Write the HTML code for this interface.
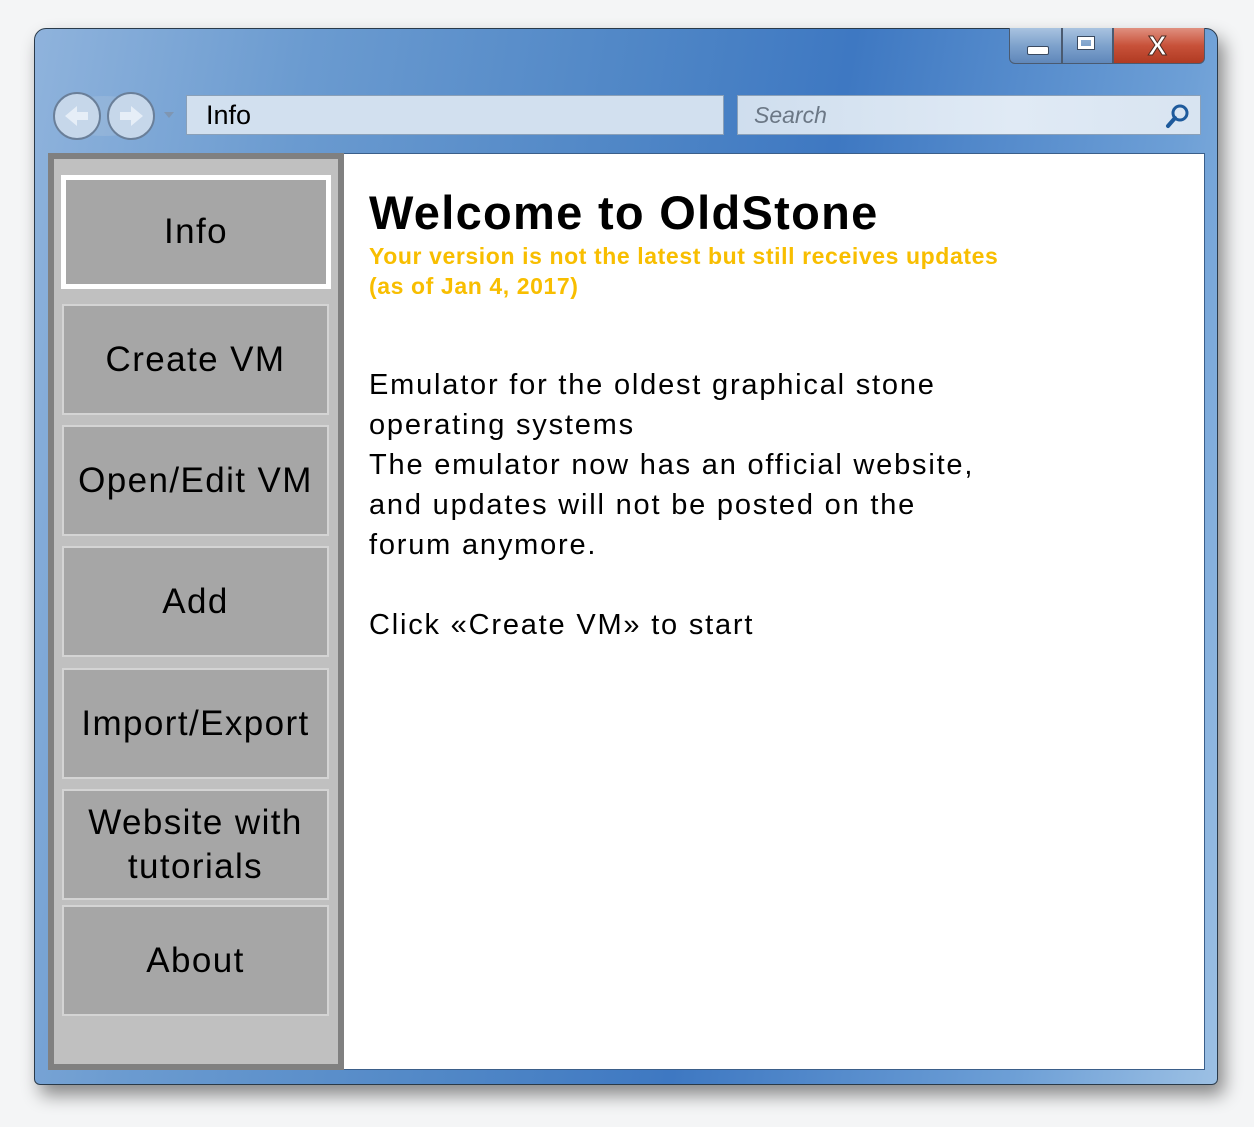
<!DOCTYPE html>
<html><head><style>
body{margin:0;width:1254px;height:1127px;background:#f4f5f6;position:relative;overflow:hidden;font-family:"Liberation Sans","DejaVu Sans",sans-serif;}
.win{position:absolute;left:34px;top:28px;width:1184px;height:1057px;border-radius:12px 12px 6px 6px;border:1px solid #2a3a4a;box-sizing:border-box;
background:linear-gradient(100deg,#8fb3dc 0%,#6b9bd0 20%,#4f86c6 45%,#3e78c2 60%,#6d9fd6 85%,#9cc0e4 100%);box-shadow:6px 10px 18px rgba(0,0,0,.45);}
.ctl{position:absolute;top:28px;height:36px;border:1px solid #4a5a70;border-top:none;box-sizing:border-box;}
.addr{position:absolute;left:186px;top:95px;width:538px;height:40px;background:#d2e0ef;border:1px solid #8aa0b8;box-sizing:border-box;font-size:27px;padding:4px 0 0 19px;color:#000;}
.search{position:absolute;left:737px;top:95px;width:464px;height:40px;background:linear-gradient(90deg,#cfdeee,#e0eaf5 60%,#d8e4f1);border:1px solid #8aa0b8;box-sizing:border-box;font-size:23px;padding:6px 0 0 16px;color:#6b7785;font-style:italic;}
.client{position:absolute;left:48px;top:153px;width:1157px;height:917px;background:#fff;border:1px solid #3b5f8a;box-sizing:border-box;}
.side{position:absolute;left:48px;top:153px;width:296px;height:917px;background:#c0c0c0;border:6px solid #808080;box-sizing:border-box;}
.btn{position:absolute;left:62px;width:267px;background:#a6a6a6;border:2px solid #d4d4d4;box-sizing:border-box;font-size:35px;letter-spacing:1.4px;color:#000;display:flex;align-items:center;justify-content:center;text-align:center;line-height:44px;}
.t{position:absolute;white-space:nowrap;}
</style></head><body>
<div class="win"></div>
<div class="ctl" style="left:1009px;width:53px;border-radius:0 0 0 6px;background:linear-gradient(#a9c3e0,#7ea2cc 50%,#5f87ba);"></div>
<div style="position:absolute;left:1027px;top:46px;width:20px;height:7px;background:#fff;border:1px solid #3a4a60;border-radius:2px"></div>
<div class="ctl" style="left:1062px;width:51px;background:linear-gradient(#a9c3e0,#7ea2cc 50%,#5f87ba);"></div>
<div style="position:absolute;left:1078px;top:37px;width:16px;height:12px;border:3px solid #fff;outline:1px solid #3a4a60;box-sizing:border-box"></div>
<div class="ctl" style="left:1113px;width:92px;border-radius:0 0 6px 0;background:linear-gradient(#e09080,#c8523a 50%,#b03a22);"></div>
<div class="t" style="left:1148px;top:30px;font-size:28px;font-weight:bold;color:#fff;-webkit-text-stroke:1px #4a2a20">X</div>
<svg style="position:absolute;left:50px;top:88px" width="130" height="56">
<ellipse cx="54" cy="28" rx="50" ry="20" fill="#9bb9da" opacity=".6"/>
<circle cx="27" cy="28" r="23" fill="#c6d7ea" stroke="#6a7f99" stroke-width="2"/>
<circle cx="81" cy="28" r="23" fill="#c6d7ea" stroke="#6a7f99" stroke-width="2"/>
<path d="M15 28 L27 18 V24 H38 V32 H27 V38 Z" fill="#e6eef7"/>
<path d="M93 28 L81 18 V24 H70 V32 H81 V38 Z" fill="#e6eef7"/>
<path d="M114 24 L124 24 L119 30 Z" fill="#7f96b2"/>
</svg>
<div class="addr">Info</div>
<div class="search">Search</div>
<svg style="position:absolute;left:1164px;top:102px" width="28" height="28"><circle cx="16" cy="11" r="7" fill="none" stroke="#1e5a9c" stroke-width="3"/><path d="M11 16 L4 24" stroke="#1e5a9c" stroke-width="4" stroke-linecap="round"/></svg>
<div class="client"></div>
<div class="side"></div>
<div class="btn" style="left:61px;top:175px;width:270px;height:114px;border:5px solid #fff;">Info</div>
<div class="btn" style="top:304px;height:111px;">Create VM</div>
<div class="btn" style="top:425px;height:111px;">Open/Edit VM</div>
<div class="btn" style="top:546px;height:111px;">Add</div>
<div class="btn" style="top:668px;height:111px;">Import/Export</div>
<div class="btn" style="top:789px;height:111px;">Website with<br>tutorials</div>
<div class="btn" style="top:905px;height:111px;">About</div>
<div class="t" style="left:369px;top:185px;font-size:47px;font-weight:bold;letter-spacing:1.3px">Welcome to OldStone</div>
<div class="t" style="left:369px;top:243px;font-size:23px;font-weight:bold;color:#f8be00;letter-spacing:.6px">Your version is not the latest but still receives updates</div>
<div class="t" style="left:369px;top:273px;font-size:23px;font-weight:bold;color:#f8be00;letter-spacing:.6px">(as of Jan 4, 2017)</div>
<div class="t" style="left:369px;top:365px;font-size:29px;line-height:40px;letter-spacing:1.8px">Emulator for the oldest graphical stone<br>operating systems<br>The emulator now has an official website,<br>and updates will not be posted on the<br>forum anymore.<br><br>Click «Create VM» to start</div>
</body></html>
